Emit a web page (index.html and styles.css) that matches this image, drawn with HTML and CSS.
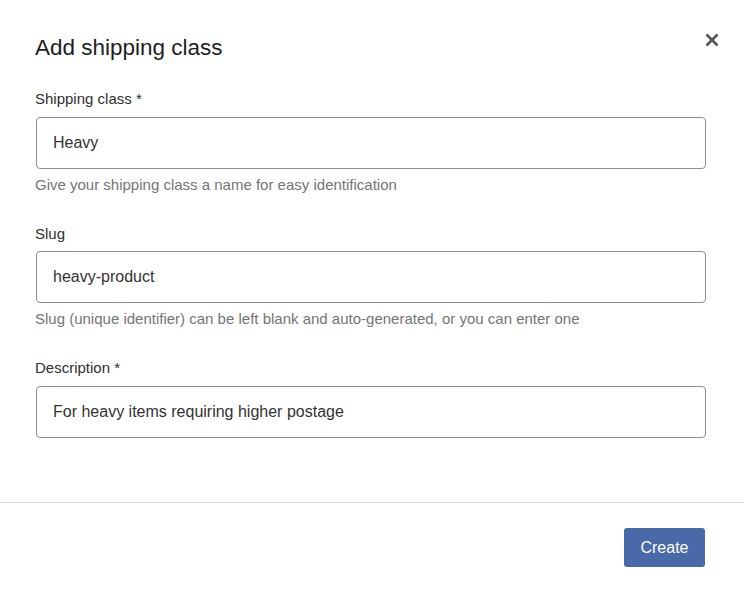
FILE: index.html
```html
<!DOCTYPE html>
<html lang="en">
<head>
<meta charset="utf-8">
<title>Add shipping class</title>
<link rel="stylesheet" href="styles.css">
</head>
<body>
<div class="modal">
  <div class="modal-body">
    <div class="modal-header">
      <h1 class="modal-title">Add shipping class</h1>
      <button class="close-btn" aria-label="Close">
        <svg width="14" height="14" viewBox="0 0 14 14"><path d="M1.5 1.5 L12.5 12.5 M12.5 1.5 L1.5 12.5" stroke="#555" stroke-width="2.6" stroke-linecap="butt" fill="none"/></svg>
      </button>
    </div>
    <div class="field">
      <label class="field-label">Shipping class *</label>
      <div class="field-input">Heavy</div>
      <p class="field-help">Give your shipping class a name for easy identification</p>
    </div>
    <div class="field">
      <label class="field-label">Slug</label>
      <div class="field-input">heavy-product</div>
      <p class="field-help">Slug (unique identifier) can be left blank and auto-generated, or you can enter one</p>
    </div>
    <div class="field">
      <label class="field-label">Description *</label>
      <div class="field-input">For heavy items requiring higher postage</div>
    </div>
  </div>
  <div class="modal-footer">
    <button class="btn-primary">Create</button>
  </div>
</div>
</body>
</html>
```
FILE: styles.css
```css
* { box-sizing: border-box; }
html, body { margin: 0; padding: 0; }
body {
  font-family: "Liberation Sans", Arial, sans-serif;
  background: #ffffff;
  color: #1e1e1e;
}
.modal {
  width: 744px;
  height: 590px;
  background: #fff;
  display: flex;
  flex-direction: column;
}
.modal-body {
  padding: 34px 38px 64px 36px;
  border-bottom: 1px solid #dcdcdc;
}
.modal-header {
  display: flex;
  justify-content: space-between;
  align-items: flex-start;
  margin-bottom: 27px;
}
.modal-title {
  margin: 0 0 0 -1px;
  font-size: 22.5px;
  line-height: 28px;
  font-weight: 400;
  color: #1e1e1e;
}
.close-btn {
  border: 0;
  background: none;
  padding: 0;
  margin: -1px -13px 0 0;
  width: 14px;
  height: 14px;
  display: flex;
  cursor: pointer;
}
.field { margin-bottom: 29px; }
.modal-header + .field .field-label,
.field:last-child .field-label { margin-bottom: 8px; }
.field:last-child { margin-bottom: 0; }
.field-label {
  display: block;
  margin: 0 0 7px -1px;
  font-size: 15px;
  line-height: 20px;
  color: #2f2f2f;
}
.field-input {
  height: 52px;
  border: 1px solid #8f8f8f;
  border-radius: 4px;
  padding: 0 16px;
  display: flex;
  align-items: center;
  font-size: 16px;
  color: #333;
}
.field-help {
  margin: 6px 0 0 -1px;
  font-size: 15px;
  line-height: 20px;
  color: #757575;
}
.modal-footer {
  display: flex;
  justify-content: flex-end;
  padding: 25px 39px 0 0;
}
.btn-primary {
  height: 39px;
  width: 81px;
  border: 0;
  border-radius: 3px;
  background: #4a69a9;
  color: #fff;
  font-family: "Liberation Sans", Arial, sans-serif;
  font-size: 16px;
  padding: 0;
  cursor: pointer;
}
```
